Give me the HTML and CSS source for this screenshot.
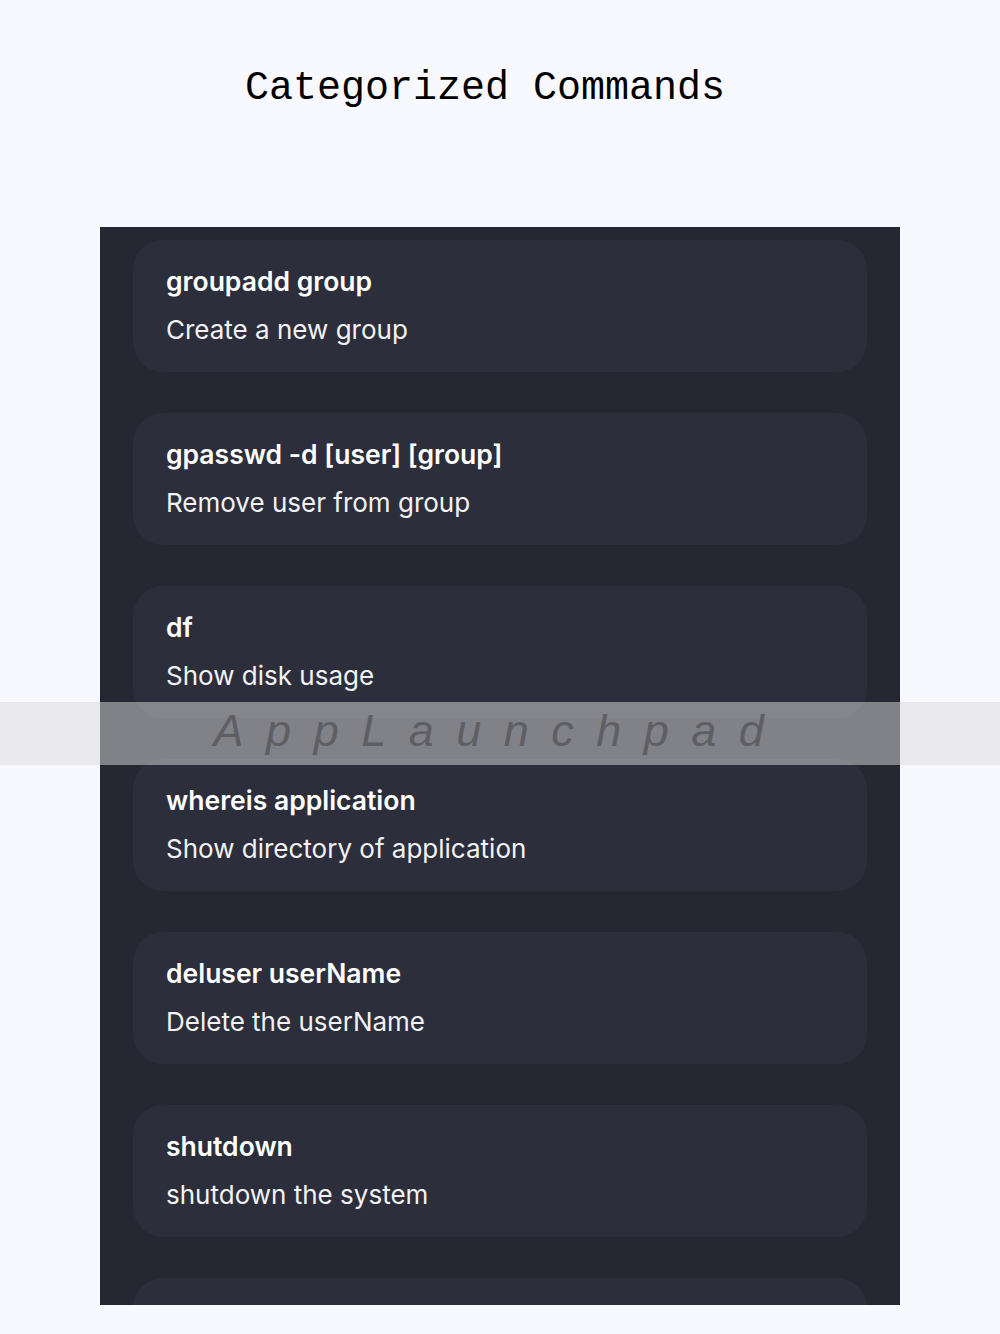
FILE: index.html
```html
<!DOCTYPE html>
<html lang="en">
<head>
  <meta charset="UTF-8">
  <meta name="viewport" content="width=device-width, initial-scale=1.0">
  <title>Categorized Commands</title>
  <link rel="stylesheet" href="styles.css">
</head>
<body>
  <header>
    <h1>Categorized Commands</h1>
  </header>

  <div class="panel">
    <div class="command">
      <h3>groupadd group</h3>
      <p>Create a new group</p>
    </div>
    <div class="command">
      <h3>gpasswd -d [user] [group]</h3>
      <p>Remove user from group</p>
    </div>
    <div class="command">
      <h3>df</h3>
      <p>Show disk usage</p>
    </div>
    <div class="command">
      <h3>whereis application</h3>
      <p>Show directory of application</p>
    </div>
    <div class="command">
      <h3>deluser userName</h3>
      <p>Delete the userName</p>
    </div>
    <div class="command">
      <h3>shutdown</h3>
      <p>shutdown the system</p>
    </div>
    <!-- next card only peeks in at the bottom -->
    <div class="command"></div>
  </div>

  <div class="watermark">AppLaunchpad</div>
</body>
</html>
```

FILE: styles.css
```css
body {
  font-family: Inter, 'Noto Sans', sans-serif;
  background: #f8f9fe;
  color: #fff;
  margin: 0;
  padding: 0;
}
header {
  text-align: center;
  padding: 61px 30px 0 0;
  height: 166px;
}
header h1 {
  font-family: 'Liberation Mono', monospace;
  font-weight: normal;
  font-size: 40px;
  line-height: 56px;
  color: #000;
  margin: 0;
}
.panel {
  width: 800px;
  height: 1078px;
  margin: 0 auto;
  padding: 13px 33px 0;
  box-sizing: border-box;
  background: #252833;
  overflow: hidden;
}
.command {
  background: #2c2f3b;
  border-radius: 30px;
  height: 132px;
  margin-bottom: 41px;
  padding: 25px 33px 0;
  box-sizing: border-box;
}
.command h3 {
  font-size: 26.5px;
  font-weight: 600;
  line-height: 32px;
  margin: 0;
}
.command p {
  font-size: 26px;
  line-height: 32px;
  margin: 17px 0 0;
  color: #f2f2f4;
}
.watermark {
  position: absolute;
  top: 702px;
  left: 0;
  right: 0;
  height: 63px;
  line-height: 58px;
  background: rgba(217, 217, 217, 0.51);
  text-align: center;
  font-family: 'Liberation Sans', Arial, sans-serif;
  font-style: italic;
  font-size: 45px;
  letter-spacing: 22.5px;
  color: #5f5f63;
}
```
